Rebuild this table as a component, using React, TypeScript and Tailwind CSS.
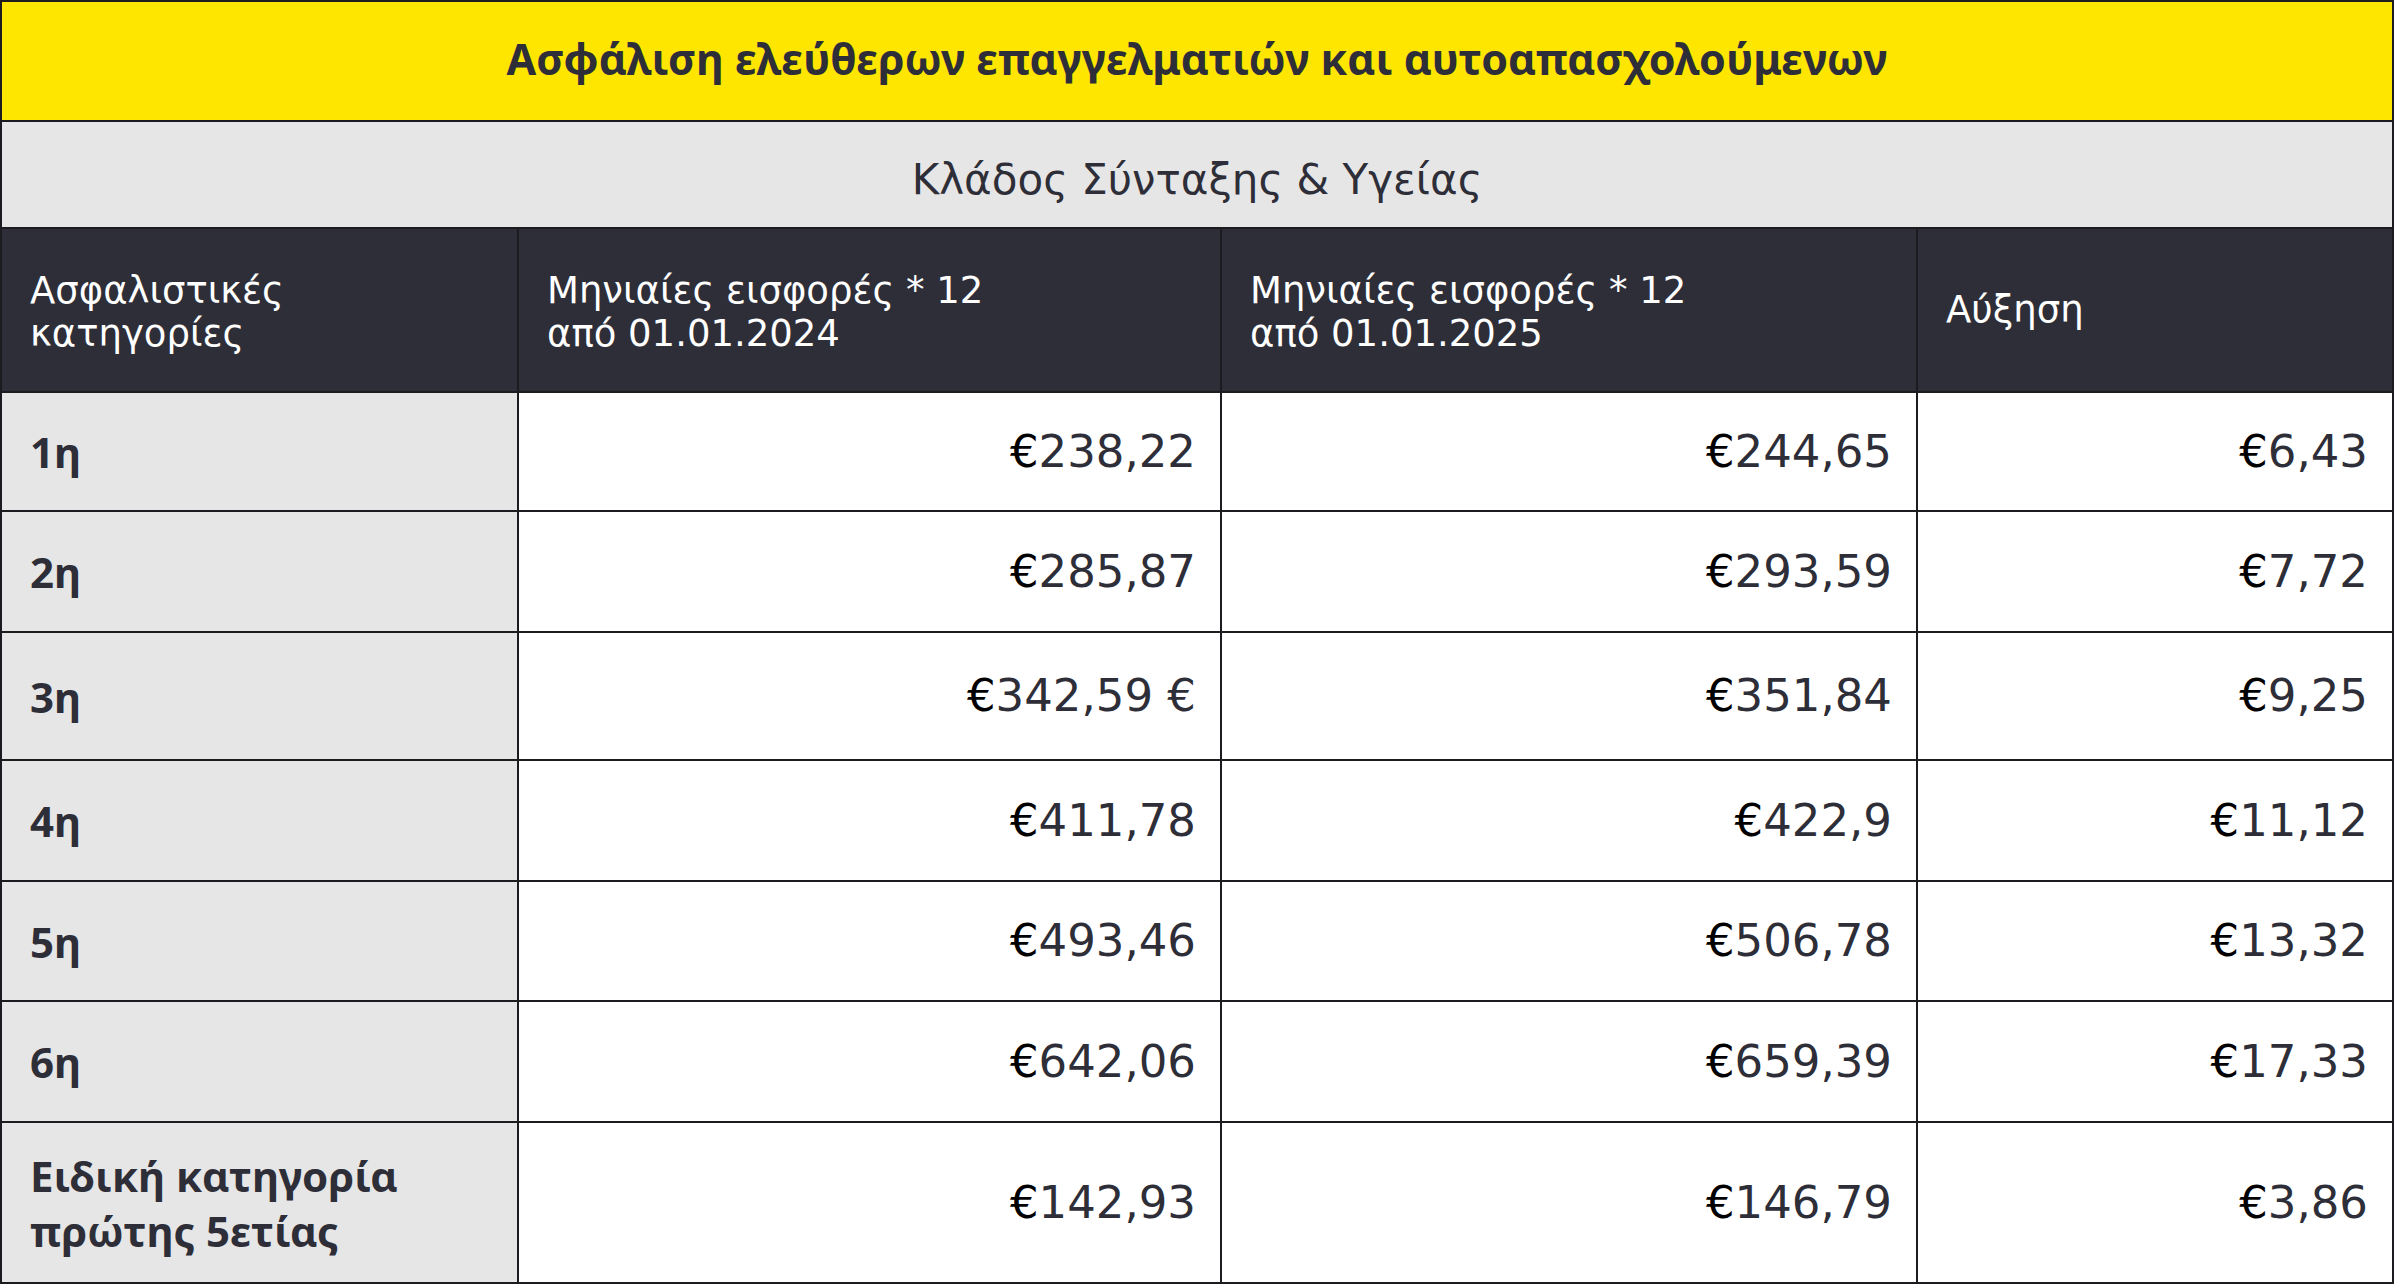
const rows = [
  { label: '1η', a: '238,22', b: '244,65', c: '6,43', h: 'h-[117px]' },
  { label: '2η', a: '285,87', b: '293,59', c: '7,72', h: 'h-[119px]' },
  { label: '3η', a: '342,59 €', b: '351,84', c: '9,25', h: 'h-[126px]' },
  { label: '4η', a: '411,78', b: '422,9', c: '11,12', h: 'h-[119px]' },
  { label: '5η', a: '493,46', b: '506,78', c: '13,32', h: 'h-[118px]' },
  { label: '6η', a: '642,06', b: '659,39', c: '17,33', h: 'h-[119px]' },
];

const boldFont = { fontFamily: '"Noto Sans", "DejaVu Sans", sans-serif' };

function Money({ value }: { value: string }) {
  return (
    <span>
      <span className="text-black">€</span>
      {value}
    </span>
  );
}

function ValueCell({ value, h }: { value: string; h: string }) {
  return (
    <div className={`${h} bg-white flex items-center justify-end pr-[24px] text-[45px] text-[#2e2e38]`}>
      <Money value={value} />
    </div>
  );
}

export default function App() {
  return (
    <div className="min-h-screen bg-white" style={{ fontFamily: '"DejaVu Sans", "Noto Sans", sans-serif' }}>
      <div className="w-[2394px] grid grid-cols-[515px_701px_694px_474px] gap-[2px] p-[2px] bg-[#1c1c20]">
        <div
          className="col-span-4 h-[118px] bg-[#ffe600] flex items-center justify-center pb-[4px] text-[43px] font-bold text-[#2e2e38]"
          style={boldFont}
        >
          Ασφάλιση ελεύθερων επαγγελματιών και αυτοαπασχολούμενων
        </div>
        <div className="col-span-4 h-[105px] bg-[#e6e6e6] flex items-center justify-center pt-[10px] text-[42px] text-[#2e2e38]">
          Κλάδος Σύνταξης &amp; Υγείας
        </div>

        <div className="h-[162px] bg-[#2e2e38] flex items-center px-[28px] pt-[4px] text-[37px] leading-[43px] text-white">
          <div>
            Ασφαλιστικές
            <br />
            κατηγορίες
          </div>
        </div>
        <div className="bg-[#2e2e38] flex items-center px-[28px] pt-[4px] text-[37px] leading-[43px] text-white">
          <div>
            Μηνιαίες εισφορές * 12
            <br />
            από 01.01.2024
          </div>
        </div>
        <div className="bg-[#2e2e38] flex items-center px-[28px] pt-[4px] text-[37px] leading-[43px] text-white">
          <div>
            Μηνιαίες εισφορές * 12
            <br />
            από 01.01.2025
          </div>
        </div>
        <div className="bg-[#2e2e38] flex items-center px-[28px] text-[37px] text-white">Αύξηση</div>

        {rows.map((r) => (
          <div key={r.label} className="contents">
            <div
              className={`${r.h} bg-[#e6e6e6] flex items-center px-[28px] text-[42px] font-bold text-[#2e2e38]`}
              style={boldFont}
            >
              {r.label}
            </div>
            <ValueCell value={r.a} h={r.h} />
            <ValueCell value={r.b} h={r.h} />
            <ValueCell value={r.c} h={r.h} />
          </div>
        ))}

        <div
          className="h-[159px] bg-[#e6e6e6] flex items-center px-[28px] text-[42px] leading-[55px] font-bold text-[#2e2e38]"
          style={boldFont}
        >
          <div>
            Ειδική κατηγορία
            <br />
            πρώτης 5ετίας
          </div>
        </div>
        <ValueCell value="142,93" h="h-[159px]" />
        <ValueCell value="146,79" h="h-[159px]" />
        <ValueCell value="3,86" h="h-[159px]" />
      </div>
    </div>
  );
}
